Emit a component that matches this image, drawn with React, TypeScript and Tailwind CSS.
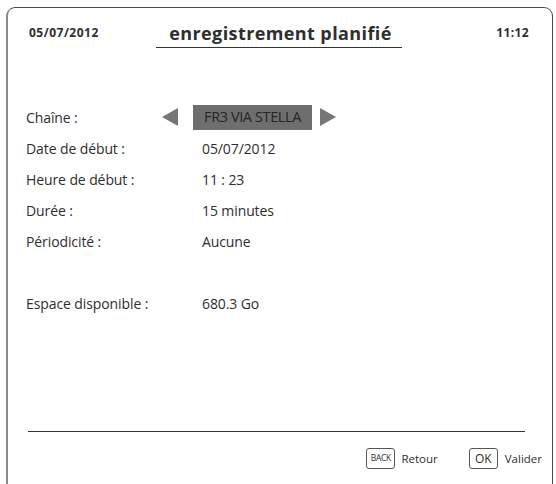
import React from "react";

const rows: { label: string; value: string }[] = [
  { label: "Date de début :", value: "05/07/2012" },
  { label: "Heure de début :", value: "11 : 23" },
  { label: "Durée :", value: "15 minutes" },
  { label: "Périodicité :", value: "Aucune" },
];

function Arrow({ dir }: { dir: "left" | "right" }) {
  return (
    <svg width="16" height="18" viewBox="0 0 16 18" className="shrink-0">
      {dir === "left" ? (
        <polygon points="16,0 16,18 0,9" fill="#767676" />
      ) : (
        <polygon points="0,0 0,18 16,9" fill="#767676" />
      )}
    </svg>
  );
}

export default function App() {
  return (
    <div
      className="min-h-screen overflow-hidden bg-white pl-[6px] pr-[3px] pt-[7px] text-[#2e2e2e]"
      style={{ fontFamily: '"Open Sans", "Noto Sans", sans-serif' }}
    >
      <div className="flex h-[490px] flex-col rounded-t-[9px] border-[1.5px] border-[#4a4a4a] border-l-[#8a8a8a] border-l-2">
        {/* header */}
        <div className="grid grid-cols-[1fr_auto_1fr] items-start pl-[21px] pr-[23px] pt-[14.5px]">
          <span className="justify-self-start text-[12px] font-bold leading-[20px] tracking-[0.5px]">
            05/07/2012
          </span>
          <span className="border-b-[1.5px] border-[#333] pb-[4px] pl-[13px] pr-[10px] text-[18px] font-bold leading-[20px] tracking-[0.4px]">
            enregistrement planifié
          </span>
          <span className="justify-self-end text-[12px] font-bold leading-[20px] tracking-[0.4px]">
            11:12
          </span>
        </div>

        {/* fields */}
        <div className="mt-[53.5px] pl-[18px] text-[14px] tracking-[-0.1px]">
          <div className="flex h-[32px] items-center">
            <span className="w-[136px] shrink-0">Chaîne :</span>
            <Arrow dir="left" />
            <span className="ml-[15px] flex h-[25px] w-[119px] items-center justify-center bg-[#6e6e6e] text-[14.5px] tracking-[-0.4px] text-[#262626]">
              FR3 VIA STELLA
            </span>
            <span className="ml-[8px]">
              <Arrow dir="right" />
            </span>
          </div>
          {rows.map((r) => (
            <div key={r.label} className="flex h-[31px] items-center">
              <span className="w-[176px] shrink-0">{r.label}</span>
              <span>{r.value}</span>
            </div>
          ))}
          <div className="h-[31px]" />
          <div className="flex h-[31px] items-center">
            <span className="w-[176px] shrink-0">Espace disponible :</span>
            <span>680.3 Go</span>
          </div>
        </div>

        {/* footer */}
        <div className="mt-auto">
          <div className="ml-[19.5px] mr-[27.5px] border-t-[1.5px] border-[#333]" />
          <div className="flex items-center justify-end pb-[27px] pr-[10px] pt-[16.5px] text-[11.5px]">
            <span className="flex h-[21px] w-[29px] items-center justify-center rounded-[3px] border border-[#555] text-[8.5px] tracking-[-0.3px]">
              BACK
            </span>
            <span className="ml-[6px]">Retour</span>
            <span className="ml-[31px] flex h-[21px] w-[29px] items-center justify-center rounded-[3px] border border-[#555] text-[12px]">
              OK
            </span>
            <span className="ml-[7px]">Valider</span>
          </div>
        </div>
      </div>
    </div>
  );
}
